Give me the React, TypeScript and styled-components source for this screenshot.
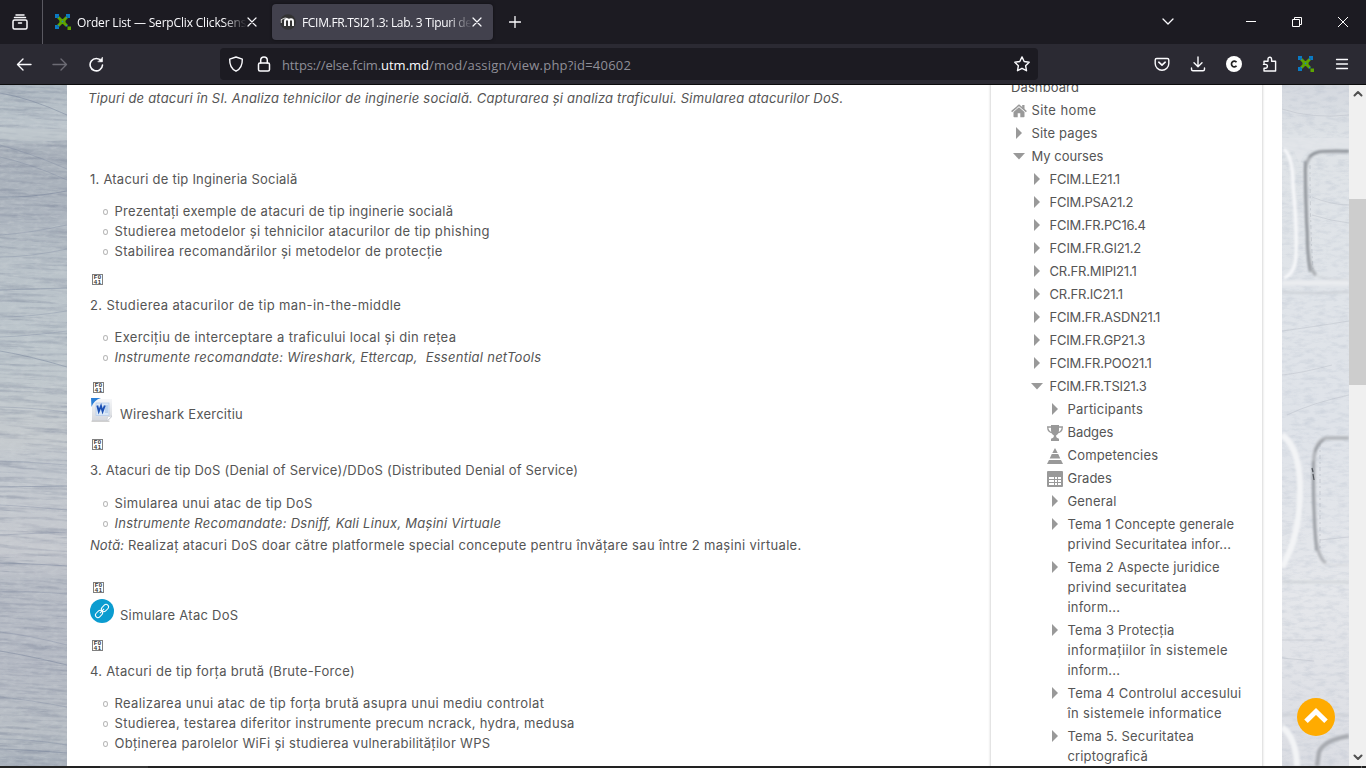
import React from 'react';
import styled, { createGlobalStyle, css } from 'styled-components';

const GlobalStyle = createGlobalStyle`
  *, *::before, *::after { box-sizing: border-box; }
  body { margin: 0; background: #fff; overflow: hidden; }
  svg { display: block; flex: none; }
`;

const uiFont = `'Open Sans', 'Noto Sans', sans-serif`;
const pageFont = `Inter, 'Liberation Sans', sans-serif`;

/* ---------- browser window ---------- */

const Window = styled.div`
  display: flex;
  flex-direction: column;
  width: 1366px;
  height: 768px;
  overflow: hidden;
  position: relative;
`;

const TabStrip = styled.header`
  display: flex;
  align-items: center;
  height: 44px;
  background: #1c1b22;
  color: #fbfbfe;
  font: 12px ${uiFont};
`;

const LibraryButton = styled.div`
  display: flex;
  align-items: center;
  width: 43px;
  height: 44px;
  padding-left: 12px;
  border-right: 1px solid #5a5961;
`;

const Tab = styled.div<{ $active?: boolean }>`
  display: flex;
  align-items: center;
  height: 36px;
  border-radius: 4px;
  ${p => p.$active
    ? css`width: 221px; margin-left: 4px; padding: 0 11px 0 8px; background: #42414d; box-shadow: 0 0 3px rgba(0,0,0,.5);`
    : css`width: 225px; padding: 0 11px 0 12px;`}
`;

const TabTitle = styled.span<{ $ls: number }>`
  flex: 1;
  margin: 2px 0 0 6px;
  overflow: hidden;
  white-space: nowrap;
  line-height: 18px;
  letter-spacing: ${p => p.$ls}px;
  mask-image: linear-gradient(to right, #000 calc(100% - 24px), transparent 100%);
`;

const NewTab = styled.div`
  margin-left: 16px;
`;

const WindowControls = styled.div`
  display: flex;
  align-items: center;
  margin-left: auto;
`;

const Control = styled.div<{ $w: number }>`
  display: flex;
  justify-content: center;
  width: ${p => p.$w}px;
`;

const NavBar = styled.div`
  display: flex;
  align-items: center;
  height: 41px;
  background: #2b2a33;
  border-bottom: 1px solid #0c0c0d;
  padding: 0 16px;
  font: 13px ${uiFont};
`;

const NavButtons = styled.div`
  display: flex;
  gap: 20px;
  width: 204px;
`;

const AddressBar = styled.div`
  display: flex;
  align-items: center;
  width: 818px;
  height: 32px;
  padding: 0 8px;
  border-radius: 4px;
  background: #1c1b22;
`;

const Url = styled.div`
  flex: 1;
  display: flex;
  margin: 1px 0 0 10px;
  line-height: 20px;
  color: #8f8f98;
`;

const UrlPart = styled.span<{ $ls: number; $host?: boolean }>`
  letter-spacing: ${p => p.$ls}px;
  color: ${p => (p.$host ? '#fbfbfe' : 'inherit')};
`;

const BarIcons = styled.div`
  display: flex;
  gap: 20px;
  margin-left: auto;
`;

const Gap = styled.span`
  width: 12px;
`;

/* ---------- page ---------- */

const Viewport = styled.div`
  display: flex;
  height: 681px;
  overflow: hidden;
  background: #fff;
`;

const Page = styled.div`
  display: flex;
  width: 1215px;
  height: 681px;
  overflow: hidden;
  font: 13px/20px ${pageFont};
  color: #555;
`;

const Content = styled.main`
  width: 924px;
  padding: 4px 0 0 23px;
`;

const Line = styled.div<{ $ls?: number; $top?: number; $italic?: boolean; $shift?: number }>`
  height: 20px;
  line-height: 18px;
  margin: ${p => p.$top ?? 0}px 0 0 ${p => p.$shift ?? 0}px;
  white-space: pre;
  letter-spacing: ${p => p.$ls ?? 0}px;
  font-style: ${p => (p.$italic ? 'italic' : 'normal')};
`;

const Span = styled.span<{ $ls: number; $italic?: boolean }>`
  letter-spacing: ${p => p.$ls}px;
  font-style: ${p => (p.$italic ? 'italic' : 'normal')};
`;

const List = styled.ul<{ $top?: number }>`
  list-style: none;
  margin: ${p => p.$top ?? 12}px 0 0;
  padding: 0 0 0 13px;
`;

const Bullet = styled.li<{ $ls: number; $italic?: boolean }>`
  display: flex;
  align-items: center;
  height: 20px;
  padding-bottom: 2px;
  white-space: pre;
  letter-spacing: ${p => p.$ls}px;
  font-style: ${p => (p.$italic ? 'italic' : 'normal')};
  &::before {
    content: '';
    width: 5px;
    height: 6px;
    margin: 2px 6.5px 0 0;
    border: 1px solid #b8b8b8;
    border-radius: 50%;
  }
`;

const GlyphBox = styled.div<{ $top: number; $left: number }>`
  display: grid;
  grid-template-columns: 4px 4px;
  grid-auto-rows: 5px;
  place-content: center;
  justify-items: center;
  width: 11px;
  height: 11px;
  margin: ${p => p.$top}px 0 0 ${p => p.$left}px;
  border: 1px solid #808080;
  font: bold 6px/5px 'Liberation Sans', sans-serif;
  color: #333;
`;

const Resource = styled.div<{ $top: number; $h: number }>`
  display: flex;
  height: ${p => p.$h}px;
  margin-top: ${p => p.$top}px;
`;

const ResourceName = styled.span<{ $ls: number }>`
  margin: 6px 0 0 6px;
  letter-spacing: ${p => p.$ls}px;
`;

const Sidebar = styled.aside`
  width: 271px;
  height: 700px;
  margin-top: -10px;
  padding: 2px 0 0 20px;
  box-shadow: 0 0 3px rgba(0, 0, 0, .28);
`;

const Node = styled.div<{ $level: number }>`
  display: flex;
  padding-left: ${p => p.$level * 18}px;
  margin-bottom: 3px;
`;

const NodeIcon = styled.span<{ $arrow: boolean }>`
  display: flex;
  justify-content: center;
  align-items: center;
  width: 16px;
  height: 20px;
  margin: ${p => (p.$arrow ? 0 : 1)}px 4.5px ${p => (p.$arrow ? 0 : -1)}px 0;
  color: #999;
`;

const NodeText = styled.span`
  display: flex;
  flex-direction: column;
  white-space: nowrap;
`;

const ScrollBar = styled.div`
  display: flex;
  flex-direction: column;
  align-items: center;
  width: 17px;
  background: #f0f0f0;
`;

const Thumb = styled.div`
  width: 17px;
  height: 186px;
  margin: 97px 0 auto;
  background: #cdcdcd;
`;

const ScrollArrow = styled.div<{ $down?: boolean }>`
  height: 17px;
  padding-top: 5px;
  transform: ${p => (p.$down ? 'rotate(180deg)' : 'none')};
`;

const BottomEdge = styled.div`
  height: 2px;
  background: linear-gradient(to right, #222 100px, #353535 100px, #353535 148px, #222 148px, #222 1361px, #666 1361px, #666 1362px, #222 1362px);
`;

const BackToTop = styled.div`
  position: absolute;
  left: 1297px;
  top: 698px;
  width: 38px;
  height: 38px;
  border-radius: 50%;
  background: #ffab00;
`;

/* ---------- icons ---------- */

const Stroke = ({ d, w = 16, h = 16, sw = 1.4, color = '#fbfbfe', children }: any) => (
  <svg width={w} height={h} viewBox={`0 0 ${w} ${h}`} fill="none" stroke={color} strokeWidth={sw} strokeLinecap="round" strokeLinejoin="round">
    {d && <path d={d} />}
    {children}
  </svg>
);

const Close = () => <Stroke w={10} h={10} sw={1.2} d="M1 1l8 8M9 1l-8 8" />;

const ClixMark = () => (
  <svg width="16" height="16" viewBox="0 0 16 16">
    <path d="M0 0h4v2.500H2.500V4H0zM11 0h4v4h-2.500V2.500H11zM0 11h2.500v1.500H4V15H0z" fill="#0a7ac4" />
    <path d="M3.200 3.200l8.600 8.600M11.800 3.200l-8.600 8.600" stroke="#5ea500" strokeWidth="3" />
    <path d="M4.500 7.500h6M7.500 5v5" stroke="#5ea500" strokeWidth="2.500" />
    <path d="M2.500 2.500H4V4H2.500zM11 2.500h1.500V4H11zM2.500 11H4v1.500H2.500zM11 11h1.500v1.500H11zM6.800 6.800h1.400v1.400H6.800z" fill="#1b86c4" />
    <path d="M12.500 12.500H16V16h-3.500z" fill="#5ea500" />
  </svg>
);

const MoodleMark = () => (
  <svg width="16" height="16" viewBox="0 0 16 16">
    <circle cx="8" cy="8" r="7.8" fill="#333" />
    <path d="M5 12V7.200q0-2 2-2t2 2V12M9 7.200q0-2 2-2t2 2V12" fill="none" stroke="#fff" strokeWidth="1.900" />
    <path d="M.8 5.800l4.200-1.800 2.300.5-2.500 1.500M1.300 6v3" fill="none" stroke="#fff" strokeWidth=".8" />
  </svg>
);

const RightTri = () => <svg width="6" height="12" viewBox="0 0 6 12"><path d="M0 0l6 6-6 6z" fill="currentColor" /></svg>;
const DownTri = () => <svg width="12" height="7" viewBox="0 0 12 7"><path d="M0 0h12L6 6.500z" fill="currentColor" /></svg>;

const Home = () => (
  <svg width="16" height="14" viewBox="0 0 16 14" fill="currentColor">
    <path d="M8 3.200L2.500 7.900V12.500q0 .8.8.8h3.400V9.300h2.600v4h3.400q.8 0 .8-.8V7.900z" />
    <path d="M.6 7.600L8 1.300l7.400 6.300" fill="none" stroke="currentColor" strokeWidth="1.500" />
    <path d="M11.200 1h2.300v4.800l-2.300-2z" />
  </svg>
);

const Trophy = () => (
  <svg width="16" height="16" viewBox="0 0 16 16" fill="currentColor">
    <path d="M4 0h8v5q0 4-2.800 5.200v1.600q0 1.200 2.800 2V16H4v-2.200q2.800-.8 2.800-2v-1.600Q4 9 4 5z" />
    <path d="M4.500 2H.7q0 5.200 5 5.800M11.500 2h3.800q0 5.200-5 5.800" fill="none" stroke="currentColor" strokeWidth="1.300" />
  </svg>
);

const Pyramid = () => (
  <svg width="16" height="16" viewBox="0 0 16 16" fill="currentColor">
    <path d="M8 0l2.700 5H5.300zM4.800 6h6.400l2.100 4.500H2.700zM2 12h12l2 4H0z" />
  </svg>
);

const Table = () => (
  <svg width="16" height="16" viewBox="0 0 16 16">
    <rect width="16" height="16" rx="1" fill="currentColor" />
    <path d="M2 6h12v8H2z" fill="#fff" />
    <path d="M2 8.500h12M2 11.500h12M7.500 6v8M10.500 6v8" stroke="#999" strokeWidth="1" />
  </svg>
);

const WordDoc = () => (
  <svg width="24" height="24" viewBox="0 0 24 24">
    <defs>
      <linearGradient id="sheet" x1="0" y1="0" x2="0" y2="1"><stop offset="0" stopColor="#f6f7f9" /><stop offset="1" stopColor="#d5d7dc" /></linearGradient>
    </defs>
    <path d="M2 1h20v18l-4 4H2z" fill="url(#sheet)" />
    <path d="M1.500 23.200h18" stroke="#bbb" strokeWidth="1" />
    <path d="M22 18l-4.500.8L17 23z" fill="#fff" stroke="#c3c6cc" strokeWidth=".6" />
    <path d="M1 0h10Q4 2 1.500 9z" fill="#2b7fd6" />
    <rect x="6" y="5" width="13" height="12.500" fill="#dbe8f7" stroke="#b3c9e8" strokeWidth=".7" />
    <path d="M15 8h3M15 10h3M15 12h3M15 14h3" stroke="#8cb0e0" strokeWidth=".8" />
    <path d="M7.300 7.500l1.500 6 2.200-5.500 1.600 5.500 2.200-6" fill="none" stroke="#1c50b5" strokeWidth="1.900" />
  </svg>
);

const LinkBadge = () => (
  <svg width="24" height="24" viewBox="0 0 24 24">
    <circle cx="12" cy="12" r="12" fill="#0b9cd0" />
    <g transform="rotate(-45 12 12)" fill="none" stroke="#fff" strokeWidth="1">
      <rect x="3.800" y="9.500" width="8" height="5" rx="2.500" />
      <rect x="12.200" y="9.500" width="8" height="5" rx="2.500" />
      <path d="M9 12h6" />
    </g>
  </svg>
);

const streaks = [[8, 30, 6], [60, 84, 4], [72, 95, 5], [112, 106, -4], [150, 140, -3], [172, 164, -4], [205, 203, 0], [232, 226, -3], [252, 246, -2], [266, 282, 3], [322, 327, 2], [376, 380, 1], [402, 401, 0], [420, 425, 1], [450, 447, 0], [478, 481, 1], [507, 509, 2], [547, 560, 3], [566, 580, 2], [612, 622, 2], [654, 660, 3], [664, 668, 1]];

const LeftWall = () => (
  <svg width="67" height="681" viewBox="0 0 67 681">
    <defs>
      <linearGradient id="lw" x1="0" y1="0" x2="0" y2="1">
        <stop offset="0" stopColor="#aeb8c1" /><stop offset=".06" stopColor="#bcc5cc" /><stop offset=".1" stopColor="#a8b0ba" />
        <stop offset=".19" stopColor="#acb4be" /><stop offset=".27" stopColor="#b9c2c9" /><stop offset=".4" stopColor="#bdc6cc" />
        <stop offset=".52" stopColor="#c5cace" /><stop offset=".56" stopColor="#c0c6cd" /><stop offset=".68" stopColor="#c6c9cf" />
        <stop offset=".73" stopColor="#b7bcc5" /><stop offset=".85" stopColor="#b4b9c3" /><stop offset=".95" stopColor="#b8bec5" /><stop offset="1" stopColor="#a7afba" />
      </linearGradient>
      <filter id="grainL" x="0" y="0" width="1" height="1" colorInterpolationFilters="sRGB">
        <feTurbulence type="fractalNoise" baseFrequency=".02 .3" numOctaves="5" seed="7" />
        <feColorMatrix values="0 0 0 0 .42  0 0 0 0 .46  0 0 0 0 .55  1.500 0 0 0 -.68" />
      </filter>
      <filter id="lightL" x="0" y="0" width="1" height="1" colorInterpolationFilters="sRGB">
        <feTurbulence type="fractalNoise" baseFrequency=".12 .3" numOctaves="3" seed="21" />
        <feColorMatrix values="0 0 0 0 .84  0 0 0 0 .86  0 0 0 0 .87  0 1.400 0 0 -.6" />
      </filter>
    </defs>
    <rect width="67" height="681" fill="url(#lw)" />
    <g transform="rotate(3)" opacity=".65"><rect x="-10" y="-20" width="120" height="720" filter="url(#grainL)" /></g>
    <rect width="67" height="681" filter="url(#lightL)" opacity=".45" />
    <path d="M0 42Q30 46 67 43V55Q30 58 0 54z" fill="#c5cdd1" opacity=".5" />
    {streaks.map(([a, b, c], i) => (
      <path key={i} d={`M0 ${a}Q30 ${(a + b) / 2 - c} 67 ${b}`} fill="none" stroke="#66748f" strokeWidth=".7" opacity={i % 3 ? .35 : .55} />
    ))}
  </svg>
);

const RightWall = () => (
  <svg width="67" height="681" viewBox="0 0 67 681">
    <defs>
      <filter id="grainR" x="0" y="0" width="1" height="1" colorInterpolationFilters="sRGB">
        <feTurbulence type="fractalNoise" baseFrequency=".09 .24" numOctaves="5" seed="4" />
        <feColorMatrix values="0 0 0 0 .66  0 0 0 0 .7  0 0 0 0 .76  1.500 0 0 0 -.64" />
      </filter>
      <filter id="soft" x="-.2" y="-.1" width="1.400" height="1.200"><feGaussianBlur stdDeviation=".9" /></filter>
      <linearGradient id="rw" x1="0" y1="0" x2="0" y2="1">
        <stop offset="0" stopColor="#d4d8df" /><stop offset=".08" stopColor="#dfe3e7" /><stop offset=".3" stopColor="#e0e4e9" />
        <stop offset=".5" stopColor="#dfe3e9" /><stop offset=".75" stopColor="#e5e7eb" /><stop offset="1" stopColor="#dbdde3" />
      </linearGradient>
    </defs>
    <rect width="67" height="681" fill="url(#rw)" />
    <rect width="67" height="681" filter="url(#grainR)" opacity=".4" />
    <path d="M0 53h67v12H30Q20 68 18 80L12 66 0 62z" fill="#e3e6ea" opacity=".7" />
    <g fill="none" filter="url(#soft)">
      <path d="M2 64Q11 72 11 100Q15 140 14 168Q14 188 2 193" stroke="#f6f7f9" strokeWidth="3.500" />
      <path d="M67 66.500H38Q25 69 23.500 84Q24 120 25.500 150Q26 184 34 190" stroke="#adb1b6" strokeWidth="3.500" />
      <path d="M34 190q7 5 33 5" stroke="#d3d6da" strokeWidth="1.500" />
      <path d="M0 207q30 2 67 0" stroke="#c6cad0" strokeWidth="1.500" />
      <path d="M0 198h67" stroke="#eaecef" strokeWidth="5" />
      <path d="M0 350Q17 362 18 400Q19 450 0 482" stroke="#f3f4f6" strokeWidth="6" />
      <path d="M67 353H44Q34 356 32 372Q31 400 33 440Q34 472 44 478" stroke="#b3b6bb" strokeWidth="3.500" />
      <path d="M40 478q6 3 27 2" stroke="#d6d8dc" strokeWidth="1.300" />
      <path d="M0 497h67" stroke="#c8ccd1" strokeWidth="1.500" />
      <path d="M0 630h67" stroke="#c9ccd2" strokeWidth="1.500" />
      <path d="M0 642Q14 652 15 681" stroke="#f3f4f6" strokeWidth="6" />
      <path d="M67 651Q42 655 37 667L35 681" stroke="#a8abb1" strokeWidth="4.500" />
      <path d="M23 76Q23 120 25 150Q25 175 28 187M67 66Q34 64 27 72" stroke="#7e838a" strokeWidth="1.500" />
      <path d="M31 376q-1 40 3 90M42 355q-6 4-9 12" stroke="#868b92" strokeWidth="1.300" />
    </g>
    <path d="M30 383l1 4M31 389l1 6" fill="none" stroke="#50545a" strokeWidth="1.200" />
    <path d="M28 80q0 60 3 104M38 358v108" fill="none" stroke="#9ba0a8" strokeWidth=".6" strokeDasharray="4 3 2 3" opacity=".6" />
    <path d="M30 112q20 8 37 8M30 130q20 6 37 8M0 246q30-4 67-10M0 290q20-2 50-10M5 330q25-12 62-20M38 455l29-3M0 555h40M0 573l32 3M0 24q30 10 67 6" fill="none" stroke="#b5bac4" strokeWidth=".6" opacity=".7" />
  </svg>
);

const Missing = ({ top, left = 2 }: { top: number; left?: number }) => (
  <GlyphBox $top={top} $left={left}><span>F</span><span>0</span><span>4</span><span>1</span></GlyphBox>
);

/* ---------- navigation tree ---------- */

type TreeRow = { level: number; icon?: React.ReactNode; lines: [string, number][] };
const closed = <RightTri />;
const open = <DownTri />;
const tree: TreeRow[] = [
  { level: 0, lines: [['Dashboard', 0.1]] },
  { level: 0, icon: <Home />, lines: [['Site home', 0.41]] },
  { level: 0, icon: closed, lines: [['Site pages', 0.13]] },
  { level: 0, icon: open, lines: [['My courses', 0]] },
  { level: 1, icon: closed, lines: [['FCIM.LE21.1', -0.18]] },
  { level: 1, icon: closed, lines: [['FCIM.PSA21.2', -0.25]] },
  { level: 1, icon: closed, lines: [['FCIM.FR.PC16.4', -0.18]] },
  { level: 1, icon: closed, lines: [['FCIM.FR.GI21.2', -0.13]] },
  { level: 1, icon: closed, lines: [['CR.FR.MIPI21.1', -0.18]] },
  { level: 1, icon: closed, lines: [['CR.FR.IC21.1', -0.18]] },
  { level: 1, icon: closed, lines: [['FCIM.FR.ASDN21.1', -0.18]] },
  { level: 1, icon: closed, lines: [['FCIM.FR.GP21.3', -0.18]] },
  { level: 1, icon: closed, lines: [['FCIM.FR.POO21.1', -0.22]] },
  { level: 1, icon: open, lines: [['FCIM.FR.TSI21.3', -0.22]] },
  { level: 2, icon: closed, lines: [['Participants', 0.23]] },
  { level: 2, icon: <Trophy />, lines: [['Badges', -0.05]] },
  { level: 2, icon: <Pyramid />, lines: [['Competencies', 0.17]] },
  { level: 2, icon: <Table />, lines: [['Grades', 0]] },
  { level: 2, icon: closed, lines: [['General', 0.15]] },
  { level: 2, icon: closed, lines: [['Tema 1 Concepte generale', 0.14], ['privind Securitatea infor...', 0.2]] },
  { level: 2, icon: closed, lines: [['Tema 2 Aspecte juridice', 0.18], ['privind securitatea', 0.25], ['inform...', 0.2]] },
  { level: 2, icon: closed, lines: [['Tema 3 Protecția', 0.22], ['informațiilor în sistemele', 0.42], ['inform...', 0.2]] },
  { level: 2, icon: closed, lines: [['Tema 4 Controlul accesului', 0.27], ['în sistemele informatice', 0.37]] },
  { level: 2, icon: closed, lines: [['Tema 5. Securitatea', 0.22], ['criptografică', 0.15]] },
];

export default function App() {
  return (
    <>
      <GlobalStyle />
      <Window>
        <TabStrip>
          <LibraryButton>
            <Stroke sw={1.5}><rect x="1" y="6" width="14" height="9" rx="1.500" /><path d="M2.500 3.500h11M4 1h8M6.500 9h3" /></Stroke>
          </LibraryButton>
          <Tab><ClixMark /><TabTitle $ls={-0.17}>Order List — SerpClix ClickSense</TabTitle><Close /></Tab>
          <Tab $active><MoodleMark /><TabTitle $ls={-0.32}>FCIM.FR.TSI21.3: Lab. 3 Tipuri de atacuri</TabTitle><Close /></Tab>
          <NewTab><Stroke w={12} h={12} sw={1.3} d="M6 .5v11M.5 6h11" /></NewTab>
          <WindowControls>
            <Control $w={120}><Stroke w={12} h={8} sw={1.3} d="M1 1l5 5 5-5" /></Control>
            <Control $w={46}><svg width="10" height="2"><rect width="10" height="1" y="0" fill="#fff" /></svg></Control>
            <Control $w={46}><svg width="10" height="10" fill="none" stroke="#fff"><path d="M.5 2.500h7v7h-7zM2.500 2.500v-2h7v7h-2" /></svg></Control>
            <Control $w={46}><svg width="10" height="10" fill="none" stroke="#fff"><path d="M0 0l10 10M10 0L0 10" /></svg></Control>
          </WindowControls>
        </TabStrip>
        <NavBar>
          <NavButtons>
            <Stroke d="M15 8.500H1.500M7 3L1.500 8.500 7 14" />
            <Stroke color="#6c6b74" d="M1 8.500h13.500M9 3l5.500 5.500L9 14" />
            <Stroke sw={1.6}><path d="M13.300 5A6.200 6.200 0 1 0 14.500 9" /><path d="M14.500 1.500v4.300h-4.300z" fill="#fbfbfe" strokeWidth=".6" /></Stroke>
          </NavButtons>
          <AddressBar>
            <Stroke d="M8 1l6.300 2.200C14.500 9 12.500 13 8 15.200 3.500 13 1.500 9 1.700 3.200z" />
            <Gap />
            <Stroke sw={1.5}><rect x="2.500" y="7" width="11" height="8" rx="1.500" /><path d="M4.700 7V4.200a3.300 3.300 0 0 1 6.600 0V7" /></Stroke>
            <Url>
              <UrlPart $ls={-0.12}>https://else.fcim.</UrlPart>
              <UrlPart $ls={0} $host>utm.md</UrlPart>
              <UrlPart $ls={0.21}>/mod/assign/view.php?id=40602</UrlPart>
            </Url>
            <Stroke d="M8 .9l2.200 4.600 5 .7-3.600 3.500.9 5L8 12.300l-4.500 2.400.9-5L.8 6.200l5-.7z" />
          </AddressBar>
          <BarIcons>
            <Stroke><path d="M1.200 4q0-1.500 1.500-1.500h10.600q1.500 0 1.500 1.500v3.500a6.800 6.800 0 0 1-13.600 0z" /><path d="M4.800 6.200L8 9.200l3.200-3" strokeWidth="1.600" /></Stroke>
            <Stroke d="M8 1v9.500M4 6.800l4 4 4-4M1.500 12v1.300q0 1.500 1.500 1.500h10q1.500 0 1.500-1.500V12" />
            <svg width="16" height="16"><circle cx="8" cy="8" r="8" fill="#fff" /><path d="M10.500 6.300A2.800 2.800 0 1 0 10.500 9.700" fill="none" stroke="#222" strokeWidth="1.700" /></svg>
            <Stroke d="M2 7.500V5.200h4V3a1.800 1.800 0 0 1 3.600 0v2.200h4V15H2v-2.800h1.500a1.700 1.700 0 0 0 0-3.800H1.500" />
            <ClixMark />
            <Stroke d="M2.500 3.500h11M2.500 8h11M2.500 12.500h11" sw={1.3} />
          </BarIcons>
        </NavBar>

        <Viewport>
          <LeftWall />
          <Page>
            <Content>
              <Line $italic $ls={0.19} $shift={-2}>Tipuri de atacuri în SI. Analiza tehnicilor de inginerie socială. Capturarea și analiza traficului. Simularea atacurilor DoS.</Line>
              <Line $top={61} $ls={0.23}>1. Atacuri de tip Ingineria Socială</Line>
              <List>
                <Bullet $ls={0.28}>Prezentați exemple de atacuri de tip inginerie socială</Bullet>
                <Bullet $ls={0.35}>Studierea metodelor și tehnicilor atacurilor de tip phishing</Bullet>
                <Bullet $ls={0.34}>Stabilirea recomandărilor și metodelor de protecție</Bullet>
              </List>
              <Missing top={12} />
              <Line $top={11} $ls={0.37}>2. Studierea atacurilor de tip man-in-the-middle</Line>
              <List>
                <Bullet $ls={0.36}>Exercițiu de interceptare a traficului local și din rețea</Bullet>
                <Bullet $ls={0.26} $italic>Instrumente recomandate: Wireshark, Ettercap,  Essential netTools</Bullet>
              </List>
              <Missing top={14} left={3} />
              <Resource $top={5} $h={25}><WordDoc /><ResourceName $ls={0.24}>Wireshark Exercitiu</ResourceName></Resource>
              <Missing top={16} />
              <Line $top={11} $ls={0.21}>3. Atacuri de tip DoS (Denial of Service)/DDoS (Distributed Denial of Service)</Line>
              <List $top={13}>
                <Bullet $ls={0.34}>Simularea unui atac de tip DoS</Bullet>
                <Bullet $ls={0.26} $italic>Instrumente Recomandate: Dsniff, Kali Linux, Mașini Virtuale</Bullet>
              </List>
              <Line $top={2}><Span $italic $ls={0.07}>Notă:</Span><Span $ls={0.32}> Realizaț atacuri DoS doar către platformele special concepute pentru învățare sau între 2 mașini virtuale.</Span></Line>
              <Missing top={26} left={3} />
              <Resource $top={6} $h={27}><LinkBadge /><ResourceName $ls={0.27}>Simulare Atac DoS</ResourceName></Resource>
              <Missing top={14} />
              <Line $top={11} $ls={0.3}>4. Atacuri de tip forța brută (Brute-Force)</Line>
              <List>
                <Bullet $ls={0.37}>Realizarea unui atac de tip forța brută asupra unui mediu controlat</Bullet>
                <Bullet $ls={0.31}>Studierea, testarea diferitor instrumente precum ncrack, hydra, medusa</Bullet>
                <Bullet $ls={0.3}>Obținerea parolelor WiFi și studierea vulnerabilităților WPS</Bullet>
              </List>
            </Content>
            <Sidebar>
              {tree.map((row, i) => (
                <Node key={i} $level={row.level}>
                  {row.icon && <NodeIcon $arrow={row.icon === closed || row.icon === open}>{row.icon}</NodeIcon>}
                  <NodeText>{row.lines.map(([text, ls]) => <Span key={text} $ls={ls}>{text}</Span>)}</NodeText>
                </Node>
              ))}
            </Sidebar>
          </Page>
          <RightWall />
          <ScrollBar>
            <ScrollArrow><Stroke w={10} h={7} sw={2} color="#505050" d="M1.500 5.500L5 2l3.500 3.500" /></ScrollArrow>
            <Thumb />
            <ScrollArrow $down><Stroke w={10} h={7} sw={2} color="#505050" d="M1.500 5.500L5 2l3.500 3.500" /></ScrollArrow>
          </ScrollBar>
        </Viewport>
        <BottomEdge />
        <BackToTop>
          <svg width="38" height="38" viewBox="0 0 38 38"><path d="M9 23.300L19 13.500l10 9.800" fill="none" stroke="#fff" strokeWidth="5" strokeLinejoin="miter" /></svg>
        </BackToTop>
      </Window>
    </>
  );
}
